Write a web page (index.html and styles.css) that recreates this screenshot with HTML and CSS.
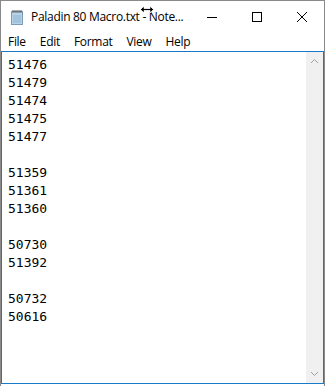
FILE: index.html
```html
<!DOCTYPE html>
<html lang="en">
<head>
  <meta charset="UTF-8" />
  <title>Paladin 80 Macro.txt - Notepad</title>
  <link rel="stylesheet" href="styles.css">
</head>
<body>
  <div class="window">
    <div class="titlebar">
      <svg class="app-icon" width="16" height="16" viewBox="0 0 16 16">
        <rect x="2.5" y="2.5" width="11" height="13" fill="#cfe3f3" stroke="#7e9bb5" />
        <rect x="3" y="4" width="10" height="11" fill="#b7d3ea" />
        <line x1="4" y1="7" x2="12" y2="7" stroke="#8fb2d0" />
        <line x1="4" y1="9" x2="12" y2="9" stroke="#8fb2d0" />
        <line x1="4" y1="11" x2="12" y2="11" stroke="#8fb2d0" />
        <line x1="4" y1="13" x2="12" y2="13" stroke="#8fb2d0" />
        <path d="M4 1v3M6 1v3M8 1v3M10 1v3M12 1v3" stroke="#555" stroke-width="1" />
      </svg>
      <span class="title">Paladin 80 Macro.txt - Note...</span>
      <!-- mouse pointer (resize cursor) sitting over the title -->
      <svg class="cursor" width="14" height="9" viewBox="0 0 14 9">
        <path d="M0.5 4.5L4 1V3.5H10V1L13.5 4.5L10 8V5.5H4V8Z" fill="#000" stroke="#fff" stroke-width="0.8" />
      </svg>
      <div class="controls">
        <span class="ctl">
          <svg width="10" height="10" viewBox="0 0 10 10"><line x1="0" y1="5.5" x2="10" y2="5.5" stroke="#000" /></svg>
        </span>
        <span class="ctl">
          <svg width="10" height="10" viewBox="0 0 10 10"><rect x="0.5" y="0.5" width="9" height="9" fill="none" stroke="#000" /></svg>
        </span>
        <span class="ctl">
          <svg width="10" height="10" viewBox="0 0 10 10"><path d="M0 0L10 10M10 0L0 10" stroke="#000" /></svg>
        </span>
      </div>
    </div>
    <div class="menubar">
      <span>File</span>
      <span>Edit</span>
      <span>Format</span>
      <span>View</span>
      <span>Help</span>
    </div>
    <div class="editor">
      <pre class="text">51476
51479
51474
51475
51477

51359
51361
51360

50730
51392

50732
50616</pre>
      <div class="scrollbar">
        <svg width="9" height="6" viewBox="0 0 9 6"><path d="M1 5L4.5 1.5L8 5" fill="none" stroke="#a0a0a0" /></svg>
        <svg width="9" height="6" viewBox="0 0 9 6"><path d="M1 1L4.5 4.5L8 1" fill="none" stroke="#a0a0a0" /></svg>
      </div>
    </div>
  </div>
</body>
</html>
```

FILE: styles.css
```css
body {
  margin: 0;
  background: #ffffff;
  font-family: "Open Sans", "Noto Sans", sans-serif;
}

.window {
  width: 325px;
  height: 386px;
  box-sizing: border-box;
  border: 1px solid #8a8a8a;
  border-bottom: none;
  display: flex;
  flex-direction: column;
  background: #fff;
}

.titlebar {
  height: 31px;
  display: flex;
  align-items: center;
  position: relative;
  flex-shrink: 0;
}

.app-icon {
  margin-left: 8px;
  margin-right: 6px;
  flex-shrink: 0;
}

.title {
  font-size: 12px;
  color: #000;
  white-space: nowrap;
  letter-spacing: -0.3px;
}

.cursor {
  position: absolute;
  left: 139px;
  top: 4px;
}

.controls {
  margin-left: auto;
  display: flex;
  height: 100%;
  flex-shrink: 0;
}

.ctl {
  width: 45px;
  display: flex;
  align-items: center;
  justify-content: center;
}

.ctl svg {
  display: block;
}

.menubar {
  height: 19px;
  display: flex;
  align-items: center;
  font-size: 12px;
  flex-shrink: 0;
  padding-left: 0;
}

.menubar span {
  padding: 0 7px;
  letter-spacing: -0.3px;
}

.editor {
  flex: 1;
  display: flex;
  border: 1px solid #1979ca;
  margin-bottom: 2px;
}

.text {
  flex: 1;
  margin: 0;
  padding: 4px 6px;
  font-family: "DejaVu Sans Mono", "Liberation Mono", monospace;
  font-size: 13px;
  line-height: 18px;
  color: #000;
}

.scrollbar {
  width: 17px;
  background: #f0f0f0;
  display: flex;
  flex-direction: column;
  justify-content: space-between;
  align-items: center;
  padding: 6px 0;
}
```
